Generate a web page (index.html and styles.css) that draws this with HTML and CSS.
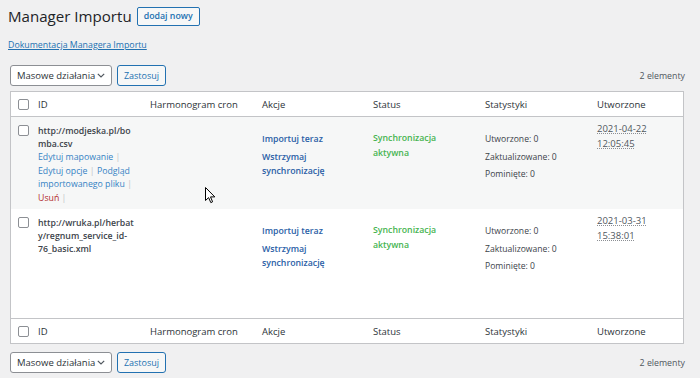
FILE: index.html
```html
<!DOCTYPE html>
<html lang="pl">
<head>
<meta charset="utf-8">
<title>Manager Importu</title>
<link rel="stylesheet" href="styles.css">
</head>
<body>
<div class="wrap">
  <div class="heading">
    <h1 class="title">Manager Importu</h1>
    <a class="btn-outline" href="#">dodaj nowy</a>
  </div>
  <p class="doc"><a href="#">Dokumentacja Managera Importu</a></p>

  <div class="tablenav">
    <div class="bulk">
      <div class="select">Masowe działania
        <svg class="chev" width="8" height="5" viewBox="0 0 8 5"><path d="M0.8 0.8 L4 4 L7.2 0.8" fill="none" stroke="#50575e" stroke-width="1.2"/></svg>
      </div>
      <a class="btn-small" href="#">Zastosuj</a>
    </div>
    <span class="count">2 elementy</span>
  </div>

  <div class="list">
    <div class="row head">
      <div class="cb"><span class="box"></span></div>
      <div class="th">ID</div>
      <div class="th">Harmonogram cron</div>
      <div class="th">Akcje</div>
      <div class="th">Status</div>
      <div class="th">Statystyki</div>
      <div class="th">Utworzone</div>
    </div>

    <div class="row item alt">
      <div class="cb cb-item"><span class="box"></span></div>
      <div class="td idcol">
        <strong class="url">http://modjeska.pl/bomba.csv</strong>
        <div class="row-actions">
          <a href="#">Edytuj mapowanie</a> <span class="sep">|</span>
          <a href="#">Edytuj opcje</a> <span class="sep">|</span> <a href="#">Podgląd importowanego pliku</a> <span class="sep">|</span>
          <a href="#" class="del">Usuń</a> <span class="sep">|</span>
        </div>
      </div>
      <div class="td"></div>
      <div class="td actions">
        <a href="#">Importuj teraz</a>
        <a href="#">Wstrzymaj synchronizację</a>
      </div>
      <div class="td status">Synchronizacja aktywna</div>
      <div class="td stats">
        <p>Utworzone: 0</p>
        <p>Zaktualizowane: 0</p>
        <p>Pominięte: 0</p>
      </div>
      <div class="td date"><abbr title="2021-04-22 12:05:45">2021-04-22 12:05:45</abbr></div>
    </div>

    <div class="row item tall">
      <div class="cb cb-item"><span class="box"></span></div>
      <div class="td idcol">
        <strong class="url">http://wruka.pl/herbaty/regnum_service_id-<wbr>76_basic.xml</strong>
        <div class="row-actions hidden">
          <a href="#">Edytuj mapowanie</a> <span class="sep">|</span>
          <a href="#">Edytuj opcje</a> <span class="sep">|</span> <a href="#">Podgląd importowanego pliku</a> <span class="sep">|</span>
          <a href="#" class="del">Usuń</a> <span class="sep">|</span>
        </div>
      </div>
      <div class="td"></div>
      <div class="td actions">
        <a href="#">Importuj teraz</a>
        <a href="#">Wstrzymaj synchronizację</a>
      </div>
      <div class="td status">Synchronizacja aktywna</div>
      <div class="td stats">
        <p>Utworzone: 0</p>
        <p>Zaktualizowane: 0</p>
        <p>Pominięte: 0</p>
      </div>
      <div class="td date"><abbr title="2021-03-31 15:38:01">2021-03-31 15:38:01</abbr></div>
    </div>

    <div class="row head foot">
      <div class="cb"><span class="box"></span></div>
      <div class="th">ID</div>
      <div class="th">Harmonogram cron</div>
      <div class="th">Akcje</div>
      <div class="th">Status</div>
      <div class="th">Statystyki</div>
      <div class="th">Utworzone</div>
    </div>
  </div>

  <div class="tablenav bottom">
    <div class="bulk">
      <div class="select">Masowe działania
        <svg class="chev" width="8" height="5" viewBox="0 0 8 5"><path d="M0.8 0.8 L4 4 L7.2 0.8" fill="none" stroke="#50575e" stroke-width="1.2"/></svg>
      </div>
      <a class="btn-small" href="#">Zastosuj</a>
    </div>
    <span class="count">2 elementy</span>
  </div>

  <svg class="cursor" width="11" height="17" viewBox="0 0 11 17"><path d="M0.5 0.5 L0.5 13.5 L3.6 10.6 L5.8 15.6 L7.6 14.8 L5.5 9.9 L9.8 9.9 Z" fill="#fff" stroke="#000" stroke-width="1" stroke-linejoin="round"/></svg>
</div>
</body>
</html>
```
FILE: styles.css
```css
* { box-sizing: border-box; }
html, body { margin: 0; padding: 0; }
body {
  background: #f0f0f1;
  font-family: "Open Sans", "Noto Sans", "Liberation Sans", sans-serif;
  font-size: 9.5px;
  color: #3c434a;
  width: 700px;
  height: 378px;
  overflow: hidden;
}
a { color: #2271b1; text-decoration: none; }

.wrap { position: relative; padding: 7px 16px 0 10px; }

.heading { display: flex; align-items: center; gap: 5px; margin-left: -2px; height: 19px; }
.title { margin: 0; font-size: 15.1px; font-weight: 400; color: #1d2327; line-height: 19px; }
.btn-outline {
  display: inline-block; height: 19px; line-height: 17px; padding: 0 6px;
  border: 1px solid #2271b1; border-radius: 2px; background: #f6f7f7;
  color: #2271b1; font-weight: 600; font-size: 8.8px;
}
.doc { margin: 12px 0 0 -2px; line-height: 14px; }
.doc a { text-decoration: underline; font-size: 8.8px; }

.tablenav { display: flex; justify-content: space-between; align-items: center; margin-top: 13px; height: 21px; }
.tablenav.bottom { margin-top: 8px; }
.bulk { display: flex; gap: 5px; align-items: center; }
.select {
  width: 102px; height: 21px; border: 1px solid #8c8f94; border-radius: 3px; background: #fff;
  color: #2c3338; padding: 0 0 0 6px; line-height: 19px; display: flex; align-items: center; justify-content: space-between;
}
.chev { margin-right: 6px; }
.btn-small {
  height: 21px; width: 49px; line-height: 19px; text-align: center; font-size: 9px;
  border: 1px solid #2271b1; border-radius: 3px; background: #f6f7f7; color: #2271b1;
}
.count { color: #50575e; margin-right: -1px; font-size: 8.8px; }

.list { margin-top: 5px; border: 1px solid #c3c4c7; background: #fff; }
.row { display: grid; grid-template-columns: 27px 112px 112px 111px 112px 112px 1fr; }
.head { height: 25px; align-items: center; border-bottom: 1px solid #c3c4c7; color: #2c3338; }
.foot { border-bottom: 0; border-top: 1px solid #c3c4c7; }
.cb { padding-left: 7px; display: flex; align-items: center; }
.cb-item { align-items: flex-start; padding-top: 8px; }
.box { display: block; width: 11px; height: 11px; border: 1px solid #8c8f94; border-radius: 2px; background: #fff; }

.item { padding-bottom: 4px; }
.alt { background: #f6f7f7; }
.tall { padding-bottom: 8px; }
.td { padding: 8px 10px 0 0; min-width: 0; font-size: 8.75px; }
.idcol { padding-right: 15px; }
.url { display: block; font-weight: 600; color: #3c434a; line-height: 13px; overflow-wrap: anywhere; }
.row-actions { line-height: 13.5px; color: #a7aaad; }
.row-actions a { color: #3582c4; }
.row-actions .del { color: #b32d2e; }
.row-actions .sep { color: #c3c4c7; }
.hidden { visibility: hidden; }

.actions { padding-top: 15px; line-height: 14px; }
.actions a { display: block; font-weight: 600; color: #2a5ea6; margin-bottom: 4px; }
.status { padding-top: 14px; padding-right: 30px; line-height: 15px; color: #46b450; font-weight: 600; }
.stats { padding-top: 15px; color: #3c434a; font-size: 8.6px; }
.stats p { margin: 0 0 3.5px; line-height: 14px; }
.date { padding-top: 5px; line-height: 14.5px; padding-right: 8px; font-size: 9.5px; }
.date abbr { text-decoration: underline dotted #8c8f94; color: #50575e; }

.cursor { position: absolute; left: 205px; top: 187px; }
```
